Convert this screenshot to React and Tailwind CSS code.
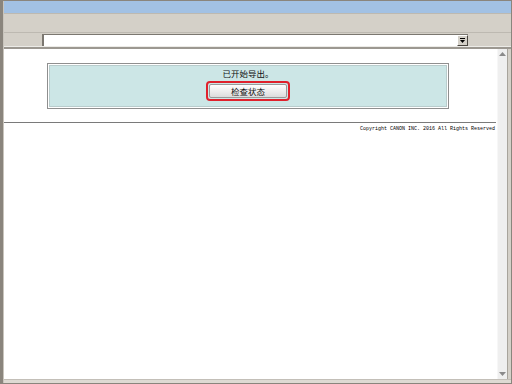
import React from "react";

const cjk = { fontFamily: '"Noto Sans CJK SC", "Noto Sans", sans-serif' };

function ArrowUp() {
  return (
    <svg width="7" height="4" viewBox="0 0 7 4">
      <path d="M3.5 0 L7 4 L0 4 Z" fill="#8a8a8a" />
    </svg>
  );
}

function ArrowDown() {
  return (
    <svg width="7" height="4" viewBox="0 0 7 4">
      <path d="M0 0 L7 0 L3.5 4 Z" fill="#8a8a8a" />
    </svg>
  );
}

export default function App() {
  return (
    <div className="w-[512px] h-[384px] bg-[#8a857d] pt-[1px] pl-[3px] pr-[1px] pb-[1px] flex">
      <div className="flex-1 flex flex-col bg-[#d4d0c8] border-l border-[#c9c5bd]">
        {/* title band */}
        <div className="h-[12px] bg-[#a2c1e4]" />
        {/* menu band */}
        <div className="h-[20px] bg-[#d4d0c8] border-t border-[#bdb9b1] border-b border-[#a6a29b]" />
        {/* address row */}
        <div className="h-[13px] flex items-center">
          <div className="w-[38px]" />
          <div className="w-[426px] h-[12px] bg-white border-l-2 border-t border-[#7b7770] flex justify-end">
            <div className="w-[11px] h-[11px] bg-[#d4d0c8] border-r border-b border-[#4a4640] border-l border-t border-l-white border-t-white flex flex-col items-center justify-center gap-[1px]">
              <div className="w-[5px] h-[1px] bg-black" />
              <svg width="5" height="3" viewBox="0 0 5 3">
                <path d="M0 0 L5 0 L2.5 3 Z" fill="#000" />
              </svg>
            </div>
          </div>
        </div>
        <div className="h-[1px] bg-[#ecebe7]" />
        <div className="h-[2px] bg-[#9c9891]" />
        {/* main */}
        <div className="flex-1 flex">
          <div className="flex-1 bg-white flex flex-col">
            <div className="mt-[14px] ml-[43px] w-[402px] h-[46px] border border-[#8f8f8f] p-[1px] bg-white">
              <div className="h-full bg-[#cce6e6] border border-[#b8cccc] flex flex-col items-center pt-[2px]">
                <div className="text-[8.5px] leading-[11px] text-[#111]" style={cjk}>
                  已开始导出。
                </div>
                <div className="mt-[2px] border-2 border-[#e0212c] rounded-[4px] p-[1px]">
                  <div
                    className="w-[78px] h-[14px] bg-gradient-to-b from-white to-[#dcdcdc] border border-[#9a9a9a] rounded-[2px] flex items-center justify-center text-[8.5px] text-[#111]"
                    style={cjk}
                  >
                    检查状态
                  </div>
                </div>
              </div>
            </div>
            <div className="mt-[13px] h-[1px] bg-[#7a7a7a] mr-[1px]" />
            <div
              className="mt-[3px] text-right pr-[2px] text-[5px] leading-[6px] text-black"
              style={{ fontFamily: '"Liberation Mono", monospace' }}
            >
              Copyright CANON INC. 2016 All Rights Reserved
            </div>
          </div>
          <div className="w-[10px] bg-[#efefef] border-l border-[#f7f7f7] flex flex-col items-center justify-between py-[3px]">
            <ArrowUp />
            <ArrowDown />
          </div>
          <div className="w-[4px] bg-[#d4d0c8] border-l border-[#a8a49c]" />
        </div>
        <div className="h-[4px] bg-[#dedad3] border-t border-[#c3bfb8]" />
      </div>
    </div>
  );
}
